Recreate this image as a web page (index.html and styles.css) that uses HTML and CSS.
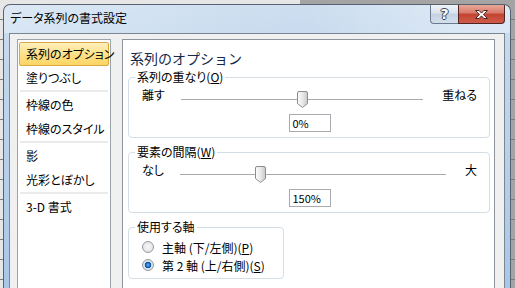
FILE: index.html
```html
<!DOCTYPE html>
<html lang="ja">
<head>
<meta charset="utf-8">
<title>データ系列の書式設定</title>
<link rel="stylesheet" href="styles.css">
</head>
<body>
<div class="dialog">
  <div class="titlebar">
    <span class="title">データ系列の書式設定</span>
    <div class="caption-buttons">
      <span class="cbtn help">?</span>
      <span class="cbtn close"><svg width="15" height="11" viewBox="0 0 15 11"><path d="M1.5 1.5h3.6l2.4 2.6 2.4-2.6h3.6l-4.1 4 4.1 4h-3.6l-2.4-2.6-2.4 2.6h-3.6l4.1-4z" fill="#fff" stroke="#4a2a26" stroke-width="1" stroke-linejoin="round"/></svg></span>
    </div>
  </div>
  <div class="client">
    <ul class="nav">
      <li class="nav-item selected">系列のオプション</li>
      <li class="nav-item">塗りつぶし</li>
      <li class="sep"></li>
      <li class="nav-item">枠線の色</li>
      <li class="nav-item">枠線のスタイル</li>
      <li class="sep"></li>
      <li class="nav-item">影</li>
      <li class="nav-item">光彩とぼかし</li>
      <li class="sep"></li>
      <li class="nav-item">3-D 書式</li>
    </ul>
    <section class="pane">
      <h2 class="pane-title">系列のオプション</h2>
      <fieldset class="group">
        <legend>系列の重なり(<u>O</u>)</legend>
        <div class="slider-row">
          <span class="end-label">離す</span>
          <div class="track"><span class="thumb" style="left:50%"><svg width="11" height="17" viewBox="0 0 11 17"><defs><linearGradient id="tg1" x1="0" y1="0" x2="1" y2="0"><stop offset="0" stop-color="#fdfdfd"/><stop offset="0.5" stop-color="#e9e9e9"/><stop offset="1" stop-color="#c9c9c9"/></linearGradient></defs><path d="M2 .5h7a1.5 1.5 0 0 1 1.5 1.5v10.5l-5 4-5-4V2A1.5 1.5 0 0 1 2 .5z" fill="url(#tg1)" stroke="#8c8c8c"/></svg></span></div>
          <span class="end-label">重ねる</span>
        </div>
        <div class="spin">0%</div>
      </fieldset>
      <fieldset class="group">
        <legend>要素の間隔(<u>W</u>)</legend>
        <div class="slider-row">
          <span class="end-label">なし</span>
          <div class="track"><span class="thumb" style="left:30%"><svg width="11" height="17" viewBox="0 0 11 17"><defs><linearGradient id="tg2" x1="0" y1="0" x2="1" y2="0"><stop offset="0" stop-color="#fdfdfd"/><stop offset="0.5" stop-color="#e9e9e9"/><stop offset="1" stop-color="#c9c9c9"/></linearGradient></defs><path d="M2 .5h7a1.5 1.5 0 0 1 1.5 1.5v10.5l-5 4-5-4V2A1.5 1.5 0 0 1 2 .5z" fill="url(#tg2)" stroke="#8c8c8c"/></svg></span></div>
          <span class="end-label">大</span>
        </div>
        <div class="spin">150%</div>
      </fieldset>
      <fieldset class="group group--axis">
        <legend>使用する軸</legend>
        <label class="radio-row"><span class="radio"></span><span>主軸 (下/左側)(<u>P</u>)</span></label>
        <label class="radio-row"><span class="radio checked"></span><span>第 2 軸 (上/右側)(<u>S</u>)</span></label>
      </fieldset>
    </section>
  </div>
</div>
</body>
</html>
```
FILE: styles.css
```css
* { box-sizing: border-box; }

html, body {
  margin: 0;
  height: 100%;
  overflow: hidden;
}

body {
  padding: 4px 4px 0 3px;
  font-family: "Noto Sans CJK JP", "Noto Sans", sans-serif;
  font-size: 12px;
  color: #000;
  font-feature-settings: "palt";
  background:
    repeating-linear-gradient(180deg, transparent 0 19px, #7d7d7d 19px 20px),
    linear-gradient(90deg, #e6e6e6 0 300px, #a4a4a4 300px);
}

.dialog {
  width: 508px;
  height: 284px;
  overflow: hidden;
  border: 1px solid #58626e;
  border-bottom: 0;
  border-radius: 7px 7px 0 0;
  background: linear-gradient(180deg, #cddef0 0, #c2d7ed 60px, #a8c7e7 100%);
  padding: 0 5px;
  display: flex;
  flex-direction: column;
}

.titlebar {
  height: 28px;
  flex: none;
  margin: 0 -5px;
  padding: 0 5px;
  display: flex;
  align-items: flex-start;
  border-radius: 6px 6px 0 0;
  background: linear-gradient(90deg, rgba(255,255,255,.3) 0, rgba(255,255,255,.05) 45%, rgba(255,255,255,0) 60%, rgba(255,255,255,.35) 92%);
}

.title {
  padding-left: 1px;
  line-height: 25px;
  font-size: 12px;
  color: #000;
}

.caption-buttons {
  margin-left: auto;
  display: flex;
}

.cbtn {
  height: 19px;
  display: flex;
  align-items: center;
  justify-content: center;
}

.help {
  width: 28px;
  border: 1px solid #6b7b8f;
  border-top: 0;
  border-right: 0;
  border-radius: 0 0 0 4px;
  background: linear-gradient(180deg, #eef3f8 0, #d9e3ee 45%, #c4d2e1 50%, #d3dfeb 100%);
  font: bold 14px "DejaVu Sans", sans-serif;
  color: #fff;
  text-shadow: 1px 0 0 #39424d, -1px 0 0 #39424d, 0 1px 0 #39424d, 0 -1px 0 #39424d;
}

.close {
  width: 47px;
  border: 1px solid #50251f;
  border-top: 0;
  border-radius: 0 0 4px 0;
  background: linear-gradient(180deg, #e9a899 0, #d8796a 45%, #c2422f 50%, #cf5d4b 100%);
}

.client {
  flex: 1;
  min-height: 0;
  border: 1px solid #7a8694;
  border-bottom: 0;
  background: #f0f0f0;
  display: flex;
  gap: 11px;
  padding: 5px 9px 0 7px;
}

.nav {
  list-style: none;
  margin: 0;
  padding: 2px 1px;
  width: 94px;
  border: 1px solid #9ca3ab;
  border-bottom: 0;
  background: #fff;
}

.nav-item {
  height: 24px;
  line-height: 22px;
  padding-left: 6px;
  border: 1px solid transparent;
  border-radius: 2px;
  white-space: nowrap;
}

.nav-item.selected {
  border-color: #dba844;
  background: linear-gradient(180deg, #fff0bd 0, #fde38f 45%, #fcd563 100%);
}

.sep {
  height: 3px;
  margin: 0 1px;
  border-top: 2px solid #ebebed;
}

.pane {
  flex: 1;
  border: 1px solid #8d949c;
  border-bottom: 0;
  background: #fff;
  padding: 7px 4px 0 5px;
}

.pane-title {
  margin: 0 0 0 2px;
  font-size: 14px;
  font-weight: normal;
  line-height: 22px;
  color: #17294a;
  font-feature-settings: normal;
}

.group {
  margin: 0;
  min-width: 0;
  border: 1px solid #d5dde5;
  border-radius: 4px;
  padding: 0 12px 5px 13px;
}

.group + .group { margin-top: 6px; }

.group legend {
  padding: 0 2px;
  margin-left: -7px;
  line-height: 16px;
}

.slider-row {
  display: flex;
  align-items: center;
  height: 17px;
  margin-top: 6px;
}

.end-label {
  margin-bottom: 10px;
  line-height: 16px;
}

.track {
  flex: 1;
  margin: 0 19px 0 16px;
  height: 1px;
  background: #a9a9a9;
  position: relative;
}

.thumb {
  position: absolute;
  top: -8px;
  width: 11px;
  height: 17px;
  margin-left: -5px;
  display: block;
}

.thumb svg { display: block; }

.spin {
  width: 42px;
  height: 18px;
  margin: 6px auto 0;
  border: 1px solid #a9abb1;
  padding-left: 3px;
  font-size: 11px;
  line-height: 16px;
  font-feature-settings: normal;
}

.group--axis {
  width: 156px;
  padding: 3px 8px 4px 13px;
}

.radio-row {
  display: flex;
  align-items: center;
  gap: 8px;
  height: 18px;
  white-space: nowrap;
}

.radio {
  width: 12px;
  height: 12px;
  flex: none;
  border-radius: 50%;
  border: 1px solid #939ba4;
  background: radial-gradient(circle at 50% 50%, #f6f6f6 0, #dedede 100%);
}

.radio.checked {
  background: radial-gradient(circle at 50% 50%, #64b6f2 0, #1c71cb 2px, #0d4c95 3px, #dfe6ee 3.6px, #cfd6de 100%);
}
```
